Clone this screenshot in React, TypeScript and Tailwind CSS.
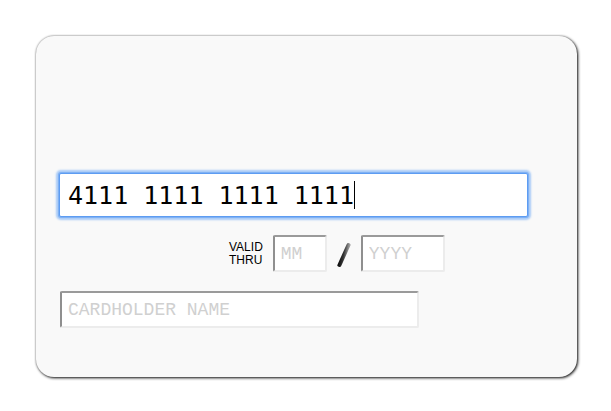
export default function App() {
  return (
    <div className="w-[611px] h-[411px] bg-white pt-[36px] pl-[36px]">
      {/* Card */}
      <div className="w-[541px] h-[341px] rounded-[18px] bg-[#f9f9f9] shadow-[1px_1px_3px_#111,0_0_2px_#aaa] px-[23px] pt-[137px] flex flex-col">
        {/* Card number */}
        <div className="w-[469px] h-[44px] bg-white border border-[#5d9cf2] shadow-[0_0_0_1px_#7fb1f4,0_0_2px_3px_#a9cbf7] rounded-[2px] flex items-center pl-[8px]">
          <span
            className="text-[25px] leading-none text-black whitespace-pre"
            style={{ fontFamily: '"DejaVu Sans Mono", monospace' }}
          >
            4111 1111 1111 1111
          </span>
          <span className="w-px h-[28px] bg-black" />
        </div>

        {/* Valid thru */}
        <div className="flex items-center mt-[18px] ml-[170px] h-[37px]">
          <div
            className="text-[12px] leading-[13px] text-black mr-[10px]"
            style={{ fontFamily: '"Liberation Sans", Arial, sans-serif' }}
          >
            VALID
            <br />
            THRU
          </div>
          <input
            placeholder="MM"
            className="w-[54px] h-[37px] bg-white rounded-[2px] border-2 border-t-[#9a9a9a] border-l-[#8f8f8f] border-r-[#ececec] border-b-[#ececec] pl-[6px] text-[18px] outline-none placeholder:text-[#d0d0d0]"
            style={{ fontFamily: '"Liberation Mono", monospace' }}
          />
          <svg width="16" height="26" viewBox="0 0 16 26" className="mx-[9px] mt-[2px]">
            <defs>
              <linearGradient id="rod" x1="0" y1="0" x2="1" y2="0.3">
                <stop offset="0" stopColor="#000" />
                <stop offset="0.55" stopColor="#333" />
                <stop offset="1" stopColor="#9a9a9a" />
              </linearGradient>
            </defs>
            <line x1="12.5" y1="3" x2="3.5" y2="23" stroke="url(#rod)" strokeWidth="4" strokeLinecap="round" />
          </svg>
          <input
            placeholder="YYYY"
            className="w-[84px] h-[37px] bg-white rounded-[2px] border-2 border-t-[#9a9a9a] border-l-[#8f8f8f] border-r-[#ececec] border-b-[#ececec] pl-[6px] text-[18px] outline-none placeholder:text-[#d0d0d0]"
            style={{ fontFamily: '"Liberation Mono", monospace' }}
          />
        </div>

        {/* Cardholder name */}
        <input
          placeholder="CARDHOLDER NAME"
          className="mt-[19px] ml-px w-[359px] h-[37px] bg-white rounded-[2px] border-2 border-t-[#9a9a9a] border-l-[#8f8f8f] border-r-[#ececec] border-b-[#ececec] pl-[6px] text-[18px] outline-none placeholder:text-[#d0d0d0]"
          style={{ fontFamily: '"Liberation Mono", monospace' }}
        />
      </div>
    </div>
  );
}
